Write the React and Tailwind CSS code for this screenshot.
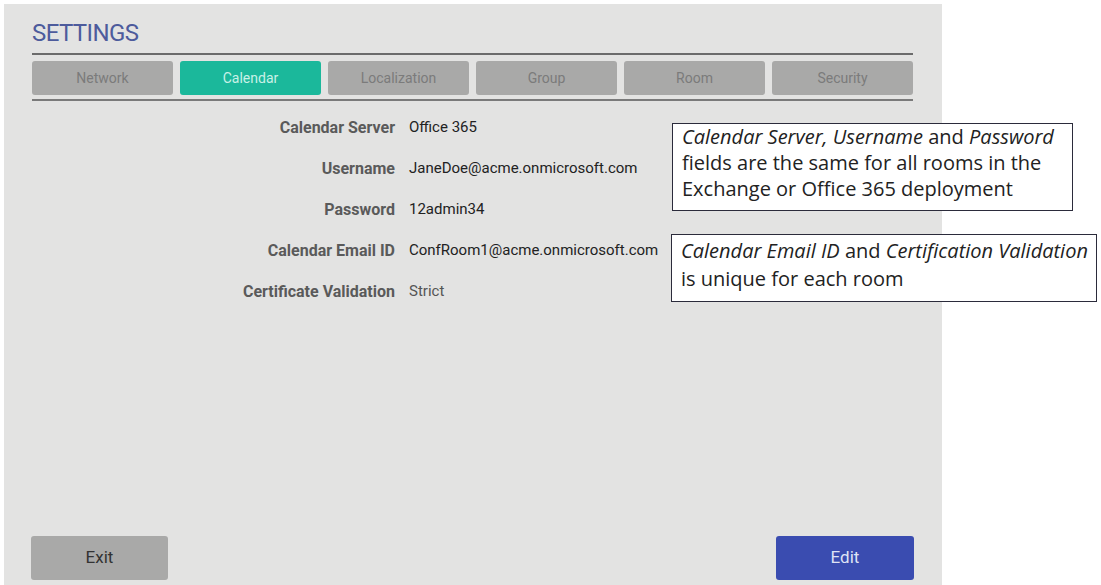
import React from 'react';

const TABS = ['Network', 'Calendar', 'Localization', 'Group', 'Room', 'Security'];

const FIELDS = [
  { label: 'Calendar Server', value: 'Office 365' },
  { label: 'Username', value: 'JaneDoe@acme.onmicrosoft.com' },
  { label: 'Password', value: '12admin34' },
  { label: 'Calendar Email ID', value: 'ConfRoom1@acme.onmicrosoft.com' },
  { label: 'Certificate Validation', value: 'Strict', muted: true },
];

const roboto = { fontFamily: 'Roboto, "Liberation Sans", sans-serif' };
const note = { fontFamily: '"Open Sans", "Noto Sans", sans-serif' };

export default function App() {
  return (
    <div className="relative w-[1101px] h-[585px] bg-white overflow-hidden" style={roboto}>
      <div className="ml-[4px] mt-[4px] w-[938px] h-[581px] bg-[#e3e3e2] flex flex-col px-[28px]">
        <h1 className="mt-[15px] text-[24px] leading-[28px] text-[#4d5b9c] tracking-tight">SETTINGS</h1>

        <div className="mt-[6px] w-[881px] border-t-[2px] border-[#6b6b6b]" />
        <div className="mt-[6px] w-[881px] flex gap-[7px]">
          {TABS.map((t) => (
            <div
              key={t}
              className={`w-[141px] h-[34px] rounded-[3px] flex items-center justify-center text-[14px] ${
                t === 'Calendar' ? 'bg-[#1bb89b] text-[#c9f1e7]' : 'bg-[#a9a9a8] text-[#7b7b7b]'
              }`}
            >
              {t}
            </div>
          ))}
        </div>
        <div className="mt-[4px] w-[881px] border-t-[2px] border-[#7a7a7a]" />

        <div className="mt-[6px] flex flex-col">
          {FIELDS.map((f) => (
            <div key={f.label} className="h-[41px] flex items-center gap-[14px]">
              <div className="w-[363px] text-right text-[16px] font-bold text-[#5a5a5a]">{f.label}</div>
              <div className={`text-[15px] ${f.muted ? 'text-[#555]' : 'text-[#222]'}`}>{f.value}</div>
            </div>
          ))}
        </div>

        <div className="flex-1" />

        <div className="mb-[5px] w-[882px] flex justify-between">
          <button className="ml-[-1px] w-[137px] h-[44px] rounded-[3px] bg-[#a9a9a8] text-[17px] text-[#333]">Exit</button>
          <button className="w-[138px] h-[44px] rounded-[3px] bg-[#3a4cb0] text-[17px] text-[#dfe3f5]">Edit</button>
        </div>
      </div>

      <div
        className="absolute left-[672px] top-[123px] w-[401px] h-[88px] border border-[#2b2b3b] bg-white pl-[9px] text-[20px] leading-[26px] text-[#222] whitespace-nowrap"
        style={note}
      >
        <i>Calendar Server, Username</i> and <i>Password</i>
        <br />
        fields are the same for all rooms in the
        <br />
        Exchange or Office 365 deployment
      </div>

      <div
        className="absolute left-[671px] top-[234px] w-[426px] h-[68px] border border-[#2b2b3b] bg-white pl-[9px] pt-[2px] text-[20px] leading-[28px] text-[#222] whitespace-nowrap"
        style={note}
      >
        <i>Calendar Email ID</i> and <i>Certification Validation</i>
        <br />
        is unique for each room
      </div>
    </div>
  );
}
